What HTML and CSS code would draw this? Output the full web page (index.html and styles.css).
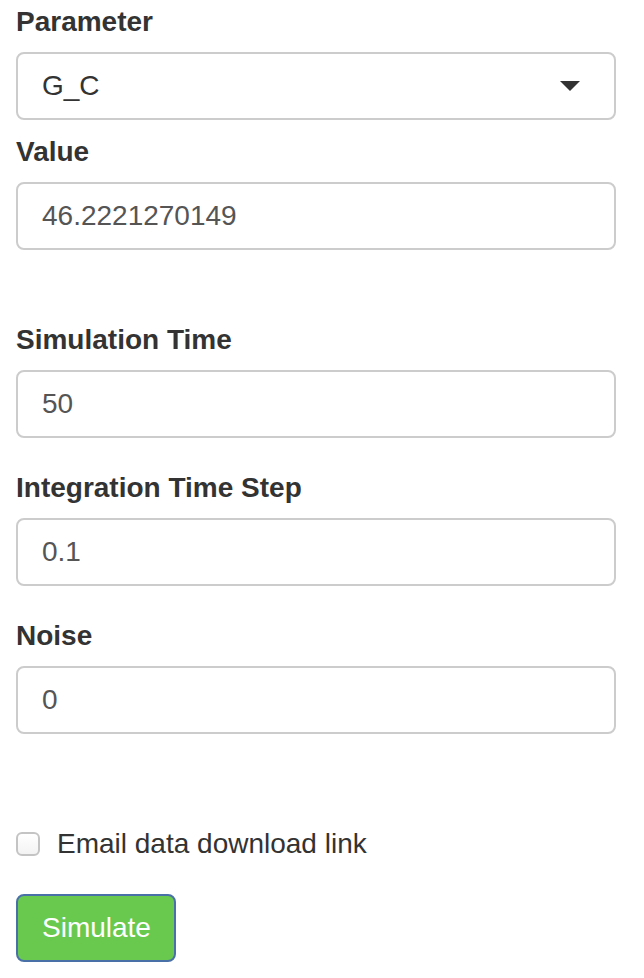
FILE: index.html
```html
<!DOCTYPE html>
<html>
<head>
<meta charset="utf-8">
<link rel="stylesheet" href="styles.css">
</head>
<body>
<form class="form">
  <div class="group group-select">
    <label class="lbl">Parameter</label>
    <div class="control select">
      <span class="select-text">G_C</span>
      <span class="caret"></span>
    </div>
  </div>
  <div class="group group-value">
    <label class="lbl">Value</label>
    <div class="control">46.2221270149</div>
  </div>
  <div class="group">
    <label class="lbl">Simulation Time</label>
    <div class="control">50</div>
  </div>
  <div class="group">
    <label class="lbl">Integration Time Step</label>
    <div class="control">0.1</div>
  </div>
  <div class="group group-noise">
    <label class="lbl">Noise</label>
    <div class="control">0</div>
  </div>
  <div class="check-row">
    <span class="checkbox"></span>
    <span class="check-text">Email data download link</span>
  </div>
  <button type="button" class="btn">Simulate</button>
</form>
</body>
</html>
```
FILE: styles.css
```css
html, body {
  margin: 0;
  padding: 0;
  background: #fff;
}
body {
  font-family: "Liberation Sans", Arial, Helvetica, sans-serif;
  font-size: 28px;
  color: #333;
}
.form {
  width: 600px;
  padding: 2px 0 0 16px;
}
.group {
  margin-bottom: 30px;
}
.group-select {
  margin-bottom: 12px;
}
.group-value {
  margin-bottom: 70px;
}
.group-noise {
  margin-bottom: 90px;
}
.lbl {
  display: block;
  font-weight: bold;
  line-height: 40px;
  margin-bottom: 10px;
  color: #333;
}
.control {
  box-sizing: border-box;
  height: 68px;
  border: 2px solid #cccccc;
  border-radius: 8px;
  padding: 0 24px;
  line-height: 64px;
  color: #555;
  background: #fff;
}
.select {
  display: flex;
  align-items: center;
  justify-content: space-between;
  padding-right: 34px;
  color: #333;
}
.caret {
  width: 0;
  height: 0;
  border-top: 10px solid #333;
  border-left: 10px solid transparent;
  border-right: 10px solid transparent;
  margin-top: 0px;
}
.check-row {
  display: flex;
  align-items: center;
  height: 40px;
  margin-bottom: 30px;
}
.checkbox {
  box-sizing: border-box;
  width: 24px;
  height: 24px;
  border: 2px solid #c4c4c4;
  border-radius: 6px;
  background: linear-gradient(#ffffff, #f3f3f3);
  margin-right: 17px;
}
.check-text {
  line-height: 40px;
  color: #333;
}
.btn {
  box-sizing: border-box;
  display: block;
  width: 160px;
  height: 68px;
  font-family: "Liberation Sans", Arial, Helvetica, sans-serif;
  font-size: 28px;
  color: #fff;
  background: #69c94f;
  border: 2px solid #4a70a8;
  border-radius: 8px;
  padding: 0 24px;
  cursor: pointer;
}
```
